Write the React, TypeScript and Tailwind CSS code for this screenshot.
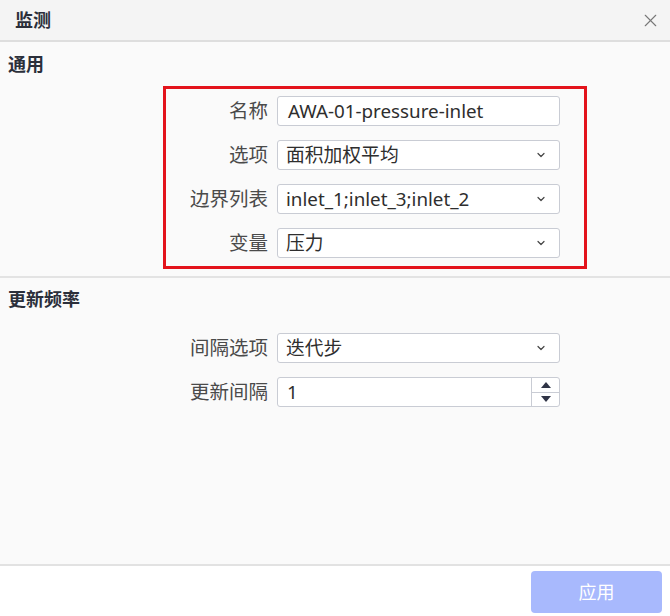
import { ChevronDown, X } from 'lucide-react';

const font = { fontFamily: '"Noto Sans", "Noto Sans CJK SC", sans-serif' };

function Field({ label, children }: { label: string; children: React.ReactNode }) {
  return (
    <div className="flex h-[30px] items-center">
      <span className="w-[111px] pr-[9px] text-right text-[19.5px] leading-none text-[#4a4a4a]">{label}</span>
      {children}
    </div>
  );
}

function TextBox({ value }: { value: string }) {
  return (
    <div className="flex h-[30px] w-[283px] items-center rounded-[3px] border border-[#c9ccd4] bg-white px-[10px] text-[18.8px] text-[#2e2e2e]">
      {value}
    </div>
  );
}

function Select({ value }: { value: string }) {
  return (
    <div className="flex h-[30px] w-[283px] items-center justify-between rounded-[3px] border border-[#c9ccd4] bg-white pl-[8px] pr-[12px] text-[18.8px] text-[#2e2e2e]">
      <span>{value}</span>
      <ChevronDown size={12} strokeWidth={2.4} className="text-[#444]" />
    </div>
  );
}

function Spin({ value }: { value: string }) {
  return (
    <div className="flex h-[30px] w-[283px] rounded-[3px] border border-[#c9ccd4] bg-white text-[18.8px] text-[#2e2e2e]">
      <span className="flex flex-1 items-center pl-[9px]">{value}</span>
      <div className="flex w-[28px] flex-col border-l border-[#c9ccd4]">
        <div className="flex flex-1 items-center justify-center border-b border-[#c9ccd4]">
          <svg width="10" height="6" viewBox="0 0 10 6"><path d="M5 0 L10 6 L0 6 Z" fill="#2f3446" /></svg>
        </div>
        <div className="flex flex-1 items-center justify-center">
          <svg width="10" height="6" viewBox="0 0 10 6"><path d="M0 0 L10 0 L5 6 Z" fill="#2f3446" /></svg>
        </div>
      </div>
    </div>
  );
}

export default function App() {
  return (
    <div className="flex h-[616px] w-[670px] flex-col bg-white" style={font}>
      <header className="flex h-[42px] shrink-0 items-center justify-between border-b-2 border-[#dedede] bg-[#f4f4f4] pl-[15px] pr-[9px]">
        <span className="text-[18px] font-bold text-[#2b2f3a]">监测</span>
        <X size={21} strokeWidth={1.3} className="text-[#777]" />
      </header>

      <div className="flex flex-1 flex-col bg-[#fafafa]">
        <section className="border-b-2 border-[#e3e3e3] pb-[7px] pt-[12px]">
          <h2 className="pl-[8px] text-[18px] font-bold leading-[20px] text-[#2b2f3a]">通用</h2>
          <div className="ml-[163px] mt-[12px] flex w-[424px] flex-col gap-[14px] border-[3px] border-[#e3131b] pb-[8px] pt-[7px]">
            <Field label="名称"><TextBox value="AWA-01-pressure-inlet" /></Field>
            <Field label="选项"><Select value="面积加权平均" /></Field>
            <Field label="边界列表"><Select value="inlet_1;inlet_3;inlet_2" /></Field>
            <Field label="变量"><Select value="压力" /></Field>
          </div>
        </section>

        <section className="pt-[11px]">
          <h2 className="pl-[8px] text-[18px] font-bold leading-[20px] text-[#2b2f3a]">更新频率</h2>
          <div className="ml-[166px] mt-[24px] flex flex-col gap-[14px]">
            <Field label="间隔选项"><Select value="迭代步" /></Field>
            <Field label="更新间隔"><Spin value="1" /></Field>
          </div>
        </section>
      </div>

      <footer className="flex h-[52px] shrink-0 items-start justify-end border-t-2 border-[#e2e2e2] bg-white pr-[8px] pt-[5px]">
        <button
          type="button"
          disabled
          className="h-[42px] w-[131px] rounded-[4px] bg-[#a8b9fd] text-[18px] text-white"
        >
          应用
        </button>
      </footer>
    </div>
  );
}
